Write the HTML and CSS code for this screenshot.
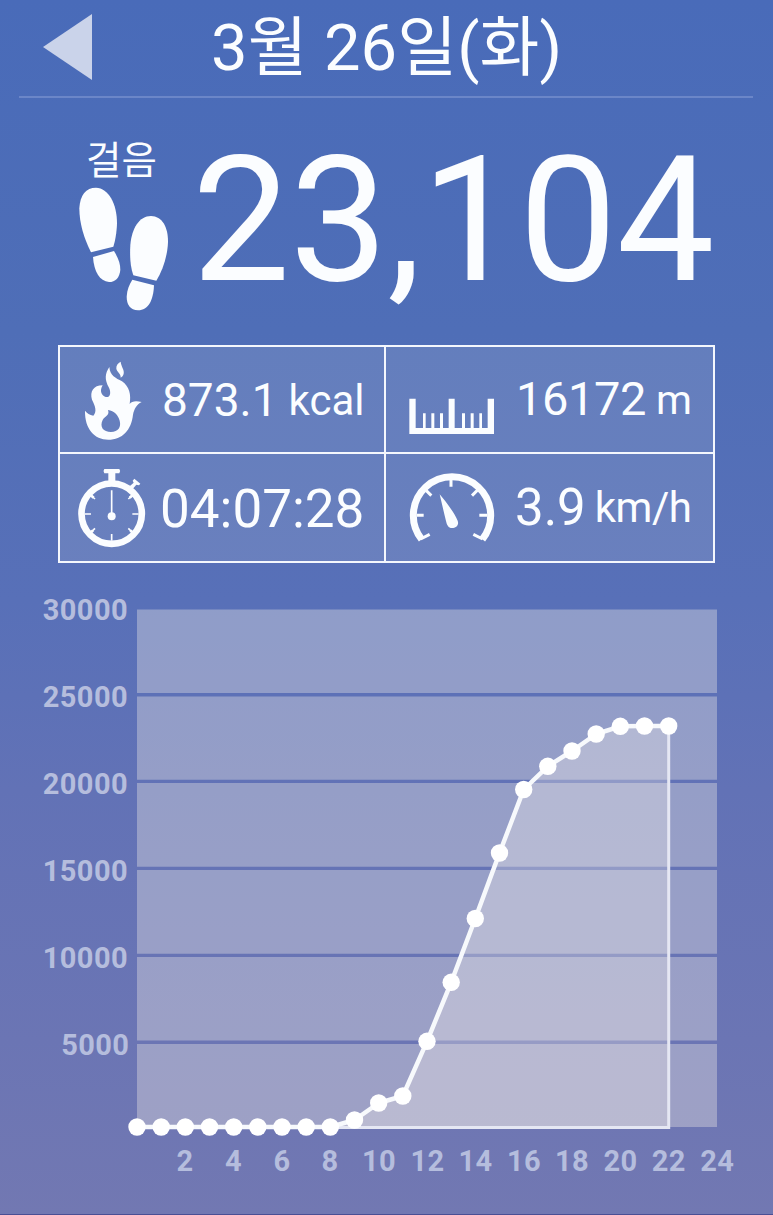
FILE: index.html
```html
<!DOCTYPE html>
<html lang="ko">
<head>
<meta charset="utf-8">
<title>3월 26일(화)</title>
<link rel="stylesheet" href="styles.css">
</head>
<body>
<main class="screen">
  <header class="header">
    <svg class="back" viewBox="0 0 49 66"><path d="M0 33 49 0V66Z"/></svg>
    <h1 class="date">3월 26일(화)</h1>
  </header>

  <section class="steps">
    <div class="steps-label">
      <span class="steps-name">걸음</span>
      <svg class="feet" viewBox="54 168 276 378">
        <path d="M93 367C72 325 58 280 58 235C60 195 78 173 108 173C145 174 171 220 171 280C170 310 165 335 160 350Z"/>
        <path d="M99 381 162 363C174 383 181 400 181 419C179 443 166 456 147 456C119 454 102 425 99 381Z"/>
        <path d="M220 436C211 410 209 380 211 345C215 295 238 258 273 258C306 259 324 290 324 335C323 375 309 420 289 452Z"/>
        <path d="M217 449 282 466C280 511 265 541 234 541C211 540 200 524 200 500C201 480 207 465 217 449Z"/>
      </svg>
    </div>
    <div class="steps-count">23,104</div>
  </section>

  <section class="stats">
    <div class="stat calories">
      <svg class="icon" viewBox="102 78 177 240">
        <path fill-rule="evenodd" d="M178 96C180 122 197 129 216 139C238 154 244 180 239 207C245 198 258 197 275 201C259 209 253 222 249 239C244 285 217 314 175 314C133 314 104 281 105 227C111 235 119 240 130 242C142 228 135 213 126 194C119 170 130 151 158 151C148 167 154 182 167 186C181 188 184 174 177 158C163 133 165 116 178 96ZM174 225C180 242 165 242 158 255C148 276 160 291 183 291C205 290 214 276 209 257C204 240 193 227 174 225Z"/>
        <path d="M212 80C213 94 224 105 221 116C220 121 216 126 212 128C213 115 201 111 199 101C198 91 204 84 212 80Z"/>
      </svg>
      <p class="reading"><span class="value">873.1</span><span class="unit">kcal</span></p>
    </div>
    <div class="stat distance">
      <svg class="icon" viewBox="87 189 258 111">
        <path d="M88 191H107V279H129V235H137V279H154V235H163V279H180V235H189V279H206V191H224V279H246V235H255V279H272V235H281V279H298V235H306V279H323V191H342V297H88Z"/>
      </svg>
      <p class="reading"><span class="value">16172</span><span class="unit">m</span></p>
    </div>
    <div class="stat time">
      <svg class="icon" viewBox="81 396 207 243">
        <path d="M163 402H208Q213 408 208 415H196V438H175V415H163Q158 408 163 402Z"/>
        <path d="M253 431 271 446 267 451 259 449 248 462 239 454 251 443 248 437Z"/>
        <circle class="line" cx="185" cy="536" r="90.500" stroke-width="20"/>
        <path class="line" stroke-width="5" d="M185 466V540M185 597V617M104 537H123M247 537H266M125 483 135 492M245 483 235 492M125 590 135 580M245 590 235 580"/>
        <path class="line" stroke-width="8" d="M121 479 131 488M249 479 239 488M121 594 129 586M249 594 241 586"/>
        <circle cx="185" cy="544" r="12"/>
      </svg>
      <p class="reading"><span class="value">04:07:28</span></p>
    </div>
    <div class="stat speed">
      <svg class="icon" viewBox="87 414 258 210">
        <path class="line" stroke-width="21" d="M125 613A116 116 0 1 1 307 613"/>
        <path class="line" stroke-width="9" d="M213 430V455M136 464 154 482M294 464 276 482M110 541H131M298 541H322M122 612 149 598M308 612 280 598"/>
        <path d="M179 478C197 499 223 533 233 557C238 570 228 579 216 579C205 579 201 571 198 558C192 533 185 504 179 478Z"/>
      </svg>
      <p class="reading"><span class="value">3.9</span><span class="unit">km/h</span></p>
    </div>
  </section>

  <svg class="chart" viewBox="0 590 773 624">
    <g class="plot">
      <path d="M137 609.500H717V693H137ZM137 696.500H717V779.700H137ZM137 783H717V866.700H137ZM137 870H717V953.700H137ZM137 957H717V1040.500H137ZM137 1044H717V1127H137Z"/>
    </g>
    <path class="area" d="M137 1127H330.300L354.500 1120 378.700 1103 402.800 1096 427 1041.300 451.200 982.300 475.300 918.500 499.500 853 523.700 789.500 547.800 766.300 572 751 596.200 734 620.300 726.300 644.500 726 668.700 726V1127.500Z"/>
    <path class="edge" d="M668.700 726V1127.500H330"/>
    <path class="curve" d="M137 1127H330.300L354.500 1120 378.700 1103 402.800 1096 427 1041.300 451.200 982.300 475.300 918.500 499.500 853 523.700 789.500 547.800 766.300 572 751 596.200 734 620.300 726.300 644.500 726 668.700 726"/>
    <g class="dots">
      <circle cx="137" cy="1127" r="8.700"/><circle cx="161.200" cy="1127" r="8.700"/><circle cx="185.300" cy="1127" r="8.700"/><circle cx="209.500" cy="1127" r="8.700"/><circle cx="233.700" cy="1127" r="8.700"/><circle cx="257.800" cy="1127" r="8.700"/><circle cx="282" cy="1127" r="8.700"/><circle cx="306.200" cy="1127" r="8.700"/><circle cx="330.300" cy="1127" r="8.700"/><circle cx="354.500" cy="1120" r="8.700"/><circle cx="378.700" cy="1103" r="8.700"/><circle cx="402.800" cy="1096" r="8.700"/><circle cx="427" cy="1041.300" r="8.700"/><circle cx="451.200" cy="982.300" r="8.700"/><circle cx="475.300" cy="918.500" r="8.700"/><circle cx="499.500" cy="853" r="8.700"/><circle cx="523.700" cy="789.500" r="8.700"/><circle cx="547.800" cy="766.300" r="8.700"/><circle cx="572" cy="751" r="8.700"/><circle cx="596.200" cy="734" r="8.700"/><circle cx="620.300" cy="726.300" r="8.700"/><circle cx="644.500" cy="726" r="8.700"/><circle cx="668.700" cy="726" r="8.700"/>
    </g>
    <g class="axis axis-y">
      <text x="128" y="620.300">30000</text>
      <text x="128" y="707">25000</text>
      <text x="128" y="793.700">20000</text>
      <text x="128" y="881">15000</text>
      <text x="128" y="968">10000</text>
      <text x="129.300" y="1055">5000</text>
    </g>
    <g class="axis axis-x">
      <text x="185" y="1171">2</text>
      <text x="233.500" y="1171">4</text>
      <text x="282" y="1171">6</text>
      <text x="330" y="1171">8</text>
      <text x="379" y="1171">10</text>
      <text x="427.500" y="1171">12</text>
      <text x="475.500" y="1171">14</text>
      <text x="524" y="1171">16</text>
      <text x="572" y="1171">18</text>
      <text x="620.500" y="1171">20</text>
      <text x="668.700" y="1171">22</text>
      <text x="717.300" y="1171">24</text>
    </g>
  </svg>
</main>
</body>
</html>
```

FILE: styles.css
```css
* { box-sizing: border-box; margin: 0; padding: 0; }

body {
  font-family: Roboto, "Noto Sans CJK KR", sans-serif;
  color: #fbfdff;
}

.screen {
  width: 773px;
  height: 1215px;
  overflow: hidden;
  display: flex;
  flex-direction: column;
  border-bottom: 1px solid #4a4f94;
  background: linear-gradient(#496bb9 0, #4f6eb7 330px, #5870b8 600px, #6272b6 790px, #6b75b4 1040px, #7278b2 1215px);
}

svg { display: block; flex: none; fill: #fbfdff; }

.header {
  display: flex;
  flex: none;
  height: 98px;
  margin: 0 20px 0 19px;
  padding-left: 24px;
  border-bottom: 2px solid #6b86c8;
}
.back { width: 49px; height: 66px; margin-top: 14px; fill: #cad3ea; }
.date {
  margin-left: 119px;
  font-size: 65px;
  font-weight: 400;
  line-height: 97px;
  letter-spacing: 0.15px;
  white-space: nowrap;
}

.steps { display: flex; flex: none; height: 247px; padding: 40px 0 0 78px; }
.steps-label { width: 92px; }
.steps-name {
  display: block;
  height: 48px;
  padding-left: 8px;
  font-size: 38.500px;
  line-height: 46px;
  white-space: nowrap;
}
.feet { width: 92px; height: 126px; }
.steps-count {
  margin: -2px 0 0 22px;
  font-size: 174.500px;
  line-height: 170px;
  letter-spacing: -0.4px;
  white-space: nowrap;
}

.stats {
  display: grid;
  flex: none;
  grid-template-columns: 326px 327px;
  grid-template-rows: 107px 107px;
  width: 657px;
  margin-left: 58px;
  border: 2px solid #f4f7fd;
  background: rgba(246, 243, 238, 0.12);
}
.stat { display: flex; align-items: flex-start; }
.calories, .time { border-right: 2px solid #f4f7fd; }
.calories, .distance { border-bottom: 2px solid #f4f7fd; }
.reading { line-height: 60px; white-space: nowrap; }
.unit { line-height: 1; }
.line { fill: none; stroke: #fbfdff; }

.calories .icon { width: 59px; height: 80px; margin: 14px 0 0 24px; }
.calories .reading { margin: 23px 0 0 19px; font-size: 46px; }
.calories .unit { margin-left: 11px; font-size: 42px; vertical-align: 1px; }

.distance .icon { width: 86px; height: 37px; margin: 51px 0 0 23px; }
.distance .reading { margin: 22px 0 0 21px; font-size: 47px; }
.distance .value { letter-spacing: -0.4px; }
.distance .unit { margin-left: 10px; font-size: 41px; vertical-align: 1px; }

.time .icon { width: 69px; height: 81px; margin: 13px 0 0 17px; }
.time .reading { margin: 25px 0 0 14px; font-size: 53px; }

.speed .icon { width: 86px; height: 70px; margin: 19px 0 0 23px; }
.speed .reading { margin: 24px 0 0 20px; font-size: 51px; }
.speed .unit { margin-left: 9px; font-size: 42px; letter-spacing: -0.5px; vertical-align: 3px; }

.chart { width: 773px; height: 624px; margin-top: 27px; }
.plot { fill: rgba(246, 240, 233, 0.35); }
.area { fill: rgba(253, 246, 237, 0.3); }
.edge { fill: none; stroke: #e5e7f3; stroke-width: 3; }
.curve { fill: none; stroke: #f7f9fc; stroke-width: 4.500; stroke-linejoin: round; }
.dots { fill: #fff; }
.axis { fill: #b5bddd; font-size: 29px; font-weight: 700; letter-spacing: 0.4px; }
.axis-y { text-anchor: end; }
.axis-x { text-anchor: middle; }
```
